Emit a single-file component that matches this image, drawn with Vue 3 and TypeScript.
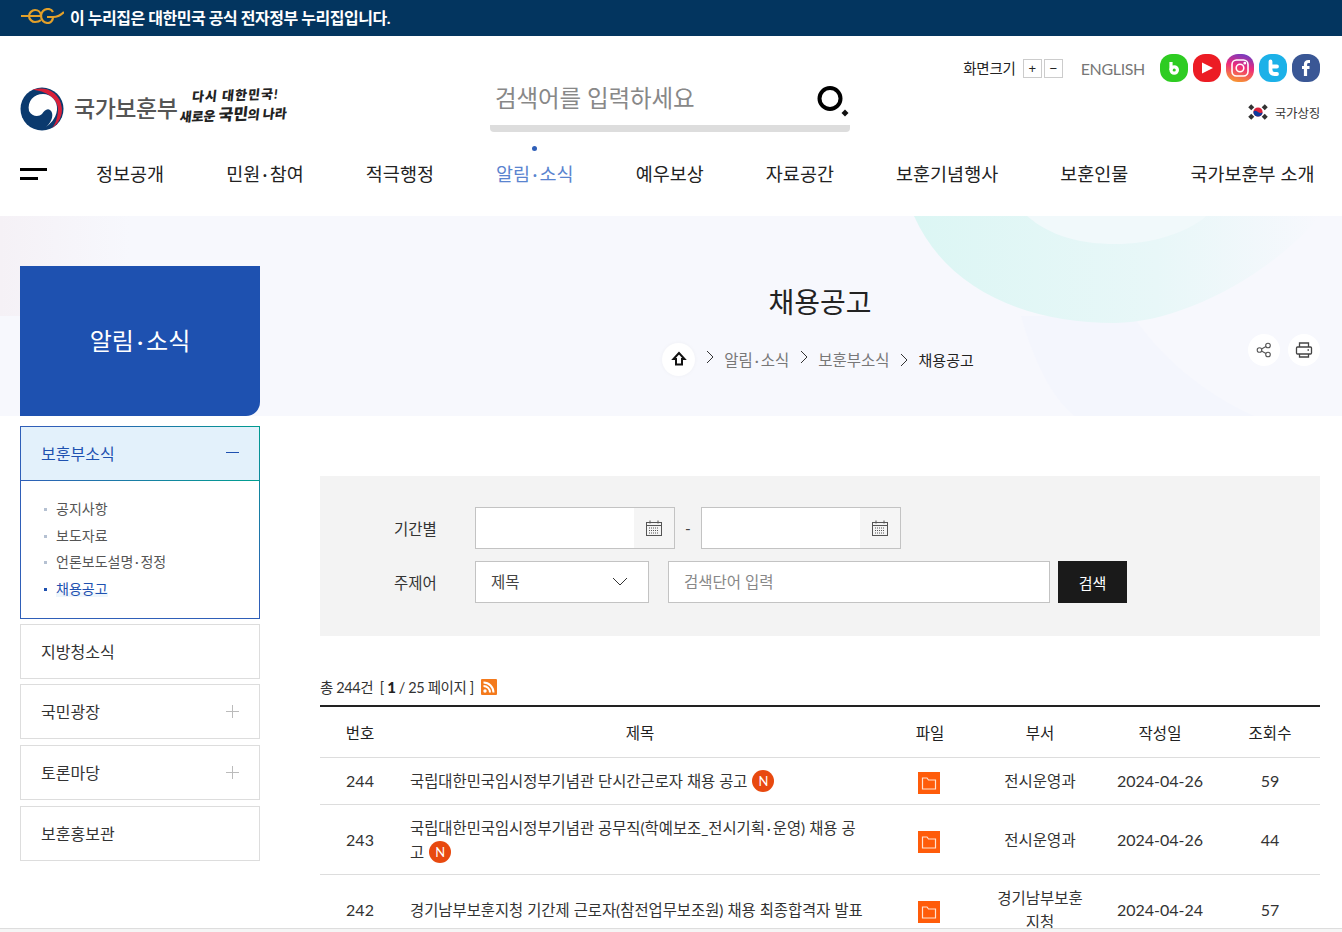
<script setup lang="ts">
const navItems: { label: string; active?: boolean }[] = [
  { label: '정보공개' },
  { label: '민원\u2009·\u2009참여' },
  { label: '적극행정' },
  { label: '알림\u2009·\u2009소식', active: true },
  { label: '예우보상' },
  { label: '자료공간' },
  { label: '보훈기념행사' },
  { label: '보훈인물' },
  { label: '국가보훈부 소개' },
]
const subItems = [
  { label: '공지사항' },
  { label: '보도자료' },
  { label: '언론보도설명\u2009·\u2009정정' },
  { label: '채용공고', active: true },
]
const sideItems = [
  { label: '지방청소식', plus: false },
  { label: '국민광장', plus: true },
  { label: '토론마당', plus: true },
  { label: '보훈홍보관', plus: false },
]
const rows = [
  { no: 244, title: '국립대한민국임시정부기념관 단시간근로자 채용 공고', isNew: true, dept: '전시운영과', date: '2024-04-26', views: 59 },
  { no: 243, title: '국립대한민국임시정부기념관 공무직(학예보조_전시기획\u2009·\u2009운영) 채용 공고', isNew: true, dept: '전시운영과', date: '2024-04-26', views: 44 },
  { no: 242, title: '경기남부보훈지청 기간제 근로자(참전업무보조원) 채용 최종합격자 발표', isNew: false, dept: '경기남부보훈지청', date: '2024-04-24', views: 57 },
]
</script>

<template>
  <div class="page">
    <div class="gov-bar">
      <svg class="egov" viewBox="0 0 44 16" width="44" height="16" fill="none" stroke="#e3a02a" stroke-width="2.200">
        <path d="M1 8h20c0-4-3-6-6-6s-6 3-6 6 3 6 6 6c3 0 5-1 6-2" />
        <path d="M33 4c-1-2-3-3-5-3-4 0-7 3-7 7s3 7 7 7c3 0 5-3 5-6h-6" />
        <path d="M33 9c4 0 8-2 11-5" />
      </svg>
      <span>이 누리집은 대한민국 공식 전자정부 누리집입니다.</span>
    </div>

    <header class="header">
      <div class="header-top">
        <div class="logo">
          <svg class="taegeuk" viewBox="0 0 44 44" width="44" height="44">
            <circle cx="22" cy="22" r="21.500" fill="#0b3a6e" />
            <path d="M12 3.100A21.500 21.500 0 0 1 32 41C36 36 38 29 38 22 38 12 25 3 12 3.100z" fill="#d8203a" />
            <path d="M9 24C7 14 14 7 23 7 31 7 38 14 37 23 36 32 29 38 26 40 33 34 34 26 30 23 27 21 24 24 22 27 19 30 12 30 9 24z" fill="#fff" />
          </svg>
          <span class="logo-name">국가보훈부</span>
          <div class="slogan">
            <span class="slogan-1">다시 대한민국!</span>
            <span class="slogan-2">새로운 <b>국민</b>의 나라</span>
          </div>
        </div>

        <div class="search">
          <span class="search-text">검색어를 입력하세요</span>
          <svg class="search-icon" viewBox="0 0 34 34" width="34" height="34" fill="none">
            <circle cx="14" cy="15.500" r="10.500" stroke="#000" stroke-width="4" />
            <path d="M29 26.500l3.500 3.500-3.500 3.500-3.500-3.500z" fill="#111" />
          </svg>
        </div>

        <div class="utils">
          <div class="utils-row">
            <span class="zoom-label">화면크기</span>
            <span class="zoom-btn first">+</span>
            <span class="zoom-btn">−</span>
            <span class="english">ENGLISH</span>
            <div class="socials">
              <span class="social blog">
                <svg viewBox="0 0 28 28" width="28" height="28" fill="none" stroke="#fff" stroke-width="3.200">
                  <path d="M11 8v8" /><circle cx="14.200" cy="16" r="3.200" />
                </svg>
              </span>
              <span class="social yt">
                <svg viewBox="0 0 28 28" width="28" height="28"><path d="M9 8.500l11 5.500-11 5.500z" fill="#fff" /></svg>
              </span>
              <span class="social ig">
                <svg viewBox="0 0 28 28" width="28" height="28" fill="none" stroke="#fff" stroke-width="1.600">
                  <rect x="6" y="6" width="16" height="16" rx="4.500" />
                  <circle cx="14" cy="14" r="3.800" />
                  <circle cx="18.800" cy="9.200" r=".6" fill="#fff" />
                </svg>
              </span>
              <span class="social tw">
                <svg viewBox="0 0 28 28" width="28" height="28" fill="none" stroke="#fff" stroke-width="3.800" stroke-linecap="round">
                  <path d="M11.500 7.500v8c0 3 1.500 4.500 4 4.500h2.500M11.500 12.500h6.500" />
                </svg>
              </span>
              <span class="social fb">
                <svg viewBox="0 0 28 28" width="28" height="28" fill="none" stroke="#fff" stroke-width="3.200">
                  <path d="M18 7.500h-1.500c-2 0-3 1-3 3V22M10 13.500h7.500" />
                </svg>
              </span>
            </div>
          </div>
          <div class="symbol">
            <svg viewBox="0 0 20 18" width="20" height="18">
              <circle cx="10" cy="9" r="4.600" fill="#d8203a" />
              <path d="M5.400 9a4.600 4.600 0 0 0 9.200 0c-1 2-3 1-4.600 0s-3.600-2-4.600 0z" fill="#0b3a9e" />
              <g stroke="#333" stroke-width="2.200">
                <path d="M1 5l3-3M2.500 6.500l3-3" />
                <path d="M16 2l3 3M14.500 3.500l3 3" />
                <path d="M1 13l3 3M2.500 11.500l3 3" />
                <path d="M19 13l-3 3M17.500 11.500l-3 3" />
              </g>
            </svg>
            <span>국가상징</span>
          </div>
        </div>
      </div>

      <nav class="nav">
        <span class="burger"><i></i><i></i></span>
        <a v-for="item in navItems" :key="item.label" class="nav-item" :class="{ active: item.active }">{{ item.label }}</a>
      </nav>
    </header>

    <section class="banner">
      <svg class="banner-art" viewBox="0 0 1342 200" width="1342" height="200" preserveAspectRatio="none">
        <defs>
          <linearGradient id="tealFade" x1="0" x2="1" y1="0" y2="0">
            <stop offset="0" stop-color="#dcf6f4" />
            <stop offset=".6" stop-color="#e8f7f8" />
            <stop offset="1" stop-color="#f7f8fd" />
          </linearGradient>
          <linearGradient id="pinkFade" x1="0" x2="1" y1="0" y2="0">
            <stop offset="0" stop-color="#f5f1f6" />
            <stop offset="1" stop-color="#f7f8fd" />
          </linearGradient>
        </defs>
        <rect x="0" y="0" width="130" height="100" fill="url(#pinkFade)" />
        <path d="M1021 100C1035 150 1055 185 1075 200H1254C1200 175 1160 140 1133 100z" fill="#f4f6fd" />
        <path d="M914 0C945 70 1020 107 1115 107 1180 107 1270 60 1320 0z" fill="url(#tealFade)" />
        <path d="M1027 0C1050 20 1080 28 1115 28 1150 28 1185 18 1207 0z" fill="#f1f9fb" />
      </svg>
      <div class="section-card">알림&#8201;·&#8201;소식</div>
      <div class="banner-center">
        <h1 class="page-title">채용공고</h1>
        <div class="crumbs">
          <span class="home">
            <svg viewBox="0 0 16 16" width="16" height="16" fill="none" stroke="#111" stroke-width="2">
              <path d="M8 2L2.500 8H5v5.500h6V8h2.500z" />
            </svg>
          </span>
          <svg class="chev" viewBox="0 0 8 14" width="8" height="14" fill="none" stroke="#333"><path d="M1 1l6 6-6 6" /></svg>
          <span class="crumb">알림&#8201;·&#8201;소식</span>
          <svg class="chev" viewBox="0 0 8 14" width="8" height="14" fill="none" stroke="#333"><path d="M1 1l6 6-6 6" /></svg>
          <span class="crumb">보훈부소식</span>
          <svg class="chev low" viewBox="0 0 8 14" width="8" height="14" fill="none" stroke="#333"><path d="M1 1l6 6-6 6" /></svg>
          <span class="crumb current">채용공고</span>
        </div>
      </div>
      <div class="banner-tools">
        <span class="tool">
          <svg viewBox="0 0 16 16" width="16" height="16" fill="none" stroke="#555" stroke-width="1.100">
            <circle cx="3.500" cy="8" r="2.300" />
            <circle cx="12" cy="3.500" r="2.300" />
            <circle cx="12" cy="12.500" r="2.300" />
            <path d="M5.500 7l4.500-2.500M5.500 9l4.500 2.500" />
          </svg>
        </span>
        <span class="tool">
          <svg viewBox="0 0 18 18" width="18" height="18" fill="none" stroke="#444" stroke-width="1.300">
            <path d="M4.500 6V2h9v4" />
            <rect x="1.500" y="6" width="15" height="7" rx="1" />
            <path d="M4.500 13v3h9v-3" />
            <path d="M12.500 9h1.500" />
          </svg>
        </span>
      </div>
    </section>

    <div class="content">
      <aside class="sidebar">
        <div class="side-active">
          <div class="side-active-head">
            <span>보훈부소식</span>
            <i class="side-minus"></i>
          </div>
          <ul class="sub-list">
            <li v-for="s in subItems" :key="s.label" class="sub-item" :class="{ active: s.active }">
              <span>{{ s.label }}</span>
            </li>
          </ul>
        </div>
        <div v-for="item in sideItems" :key="item.label" class="side-item">
          <span>{{ item.label }}</span>
          <svg v-if="item.plus" class="side-plus" viewBox="0 0 13 13" width="13" height="13" stroke="#bbb"><path d="M6.500 0v13M0 6.500h13" /></svg>
        </div>
      </aside>

      <main class="main">
        <form class="filter" @submit.prevent>
          <div class="filter-row">
            <label class="filter-label">기간별</label>
            <div class="date-box">
              <span class="date-value"></span>
              <span class="date-btn">
                <svg viewBox="0 0 16 16" width="16" height="16" fill="none" stroke="#555">
                  <rect x=".5" y="2.500" width="15" height="13" />
                  <path d="M.5 5.500h15M4 .5v3M12 .5v3" />
                  <path d="M3 8h10M3 10.500h10M3 13h10" stroke-dasharray="1 1" />
                </svg>
              </span>
            </div>
            <span class="dash">-</span>
            <div class="date-box">
              <span class="date-value"></span>
              <span class="date-btn">
                <svg viewBox="0 0 16 16" width="16" height="16" fill="none" stroke="#555">
                  <rect x=".5" y="2.500" width="15" height="13" />
                  <path d="M.5 5.500h15M4 .5v3M12 .5v3" />
                  <path d="M3 8h10M3 10.500h10M3 13h10" stroke-dasharray="1 1" />
                </svg>
              </span>
            </div>
          </div>
          <div class="filter-row">
            <label class="filter-label">주제어</label>
            <div class="select-box">
              <span>제목</span>
              <svg viewBox="0 0 16 9" width="16" height="9" fill="none" stroke="#333"><path d="M1 1l7 7 7-7" /></svg>
            </div>
            <div class="keyword">검색단어 입력</div>
            <button class="search-btn" type="button">검색</button>
          </div>
        </form>

        <div class="total">
          <span>총 244건 &nbsp;[ <b>1</b> / 25 페이지 ]</span>
          <svg class="rss" viewBox="0 0 16 16" width="16" height="16">
            <rect width="16" height="16" rx="1" fill="#f47a1c" />
            <circle cx="4" cy="12" r="1.700" fill="#fff" />
            <path d="M2.500 7a6.500 6.500 0 0 1 6.500 6.500M2.500 3.500A10 10 0 0 1 12.500 13.500" fill="none" stroke="#fff" stroke-width="2" />
          </svg>
        </div>

        <table class="board">
          <colgroup>
            <col class="c-no" /><col /><col class="c-file" /><col class="c-dept" /><col class="c-date" /><col class="c-views" />
          </colgroup>
          <thead>
            <tr>
              <th>번호</th><th>제목</th><th>파일</th><th>부서</th><th>작성일</th><th>조회수</th>
            </tr>
          </thead>
          <tbody>
            <tr v-for="r in rows" :key="r.no">
              <td>{{ r.no }}</td>
              <td class="title-cell">{{ r.title }} <span v-if="r.isNew" class="new">N</span></td>
              <td>
                <span class="file">
                  <svg viewBox="0 0 22 22" width="22" height="22" fill="none" stroke="#ffe3d2" stroke-width="1.200">
                    <path d="M4.500 17V6h4.500l1.500 2h7v9z" />
                  </svg>
                </span>
              </td>
              <td class="dept">{{ r.dept }}</td>
              <td>{{ r.date }}</td>
              <td>{{ r.views }}</td>
            </tr>
          </tbody>
        </table>
      </main>
    </div>
    <div class="page-edge"></div>
  </div>
</template>

<style>
html, body { height: 100%; overflow: hidden; }
</style>

<style scoped>
.page {
  position: relative;
  height: 932px;
  overflow: hidden;
  background: #fff;
  color: #333;
  font-family: Lato, "Noto Sans CJK KR", sans-serif;
  font-size: 15.500px;
}
.gov-bar {
  height: 36px;
  box-sizing: border-box;
  padding: 0 0 2px 20px;
  background: #03355f;
  color: #fff;
  display: flex;
  align-items: center;
  gap: 6px;
  font-size: 16px;
  font-weight: 700;
  letter-spacing: -0.45px;
}
.egov { margin-top: -2px; }

.header { height: 180px; padding: 0 22px 0 20px; display: flex; flex-direction: column; }
.header-top { display: flex; height: 110px; }
.logo { width: 470px; display: flex; align-items: flex-start; padding-top: 50px; box-sizing: border-box; }
.taegeuk { margin-top: 1px; flex: none; }
.logo-name { margin: 6px 0 0 10px; font-size: 23px; line-height: 32px; color: #555; font-weight: 500; letter-spacing: -0.5px; width: 103px; flex: none; white-space: nowrap; }
.slogan { display: flex; flex-direction: column; margin: 0 0 0 4px; font-weight: 900; color: #222; transform: skewX(-8deg) rotate(-2deg); white-space: nowrap; }
.slogan-1 { font-size: 13px; line-height: 18px; padding-left: 10px; letter-spacing: 1px; }
.slogan-2 { font-size: 13px; line-height: 20px; letter-spacing: -0.1px; }
.slogan-2 b { font-size: 16px; }

.search { width: 360px; position: relative; border-bottom: 7px solid #ddd; border-radius: 4px; height: 96px; box-sizing: border-box; padding: 44px 0 0 5px; flex: none; }
.search-text { font-size: 23.500px; line-height: 36px; color: #888; letter-spacing: -0.1px; }
.search-icon { position: absolute; right: 0; top: 47px; }

.utils { flex: 1; display: flex; flex-direction: column; align-items: flex-end; padding-top: 18px; }
.utils-row { display: flex; align-items: center; height: 28px; }
.zoom-label { font-size: 14.500px; color: #222; margin-right: 7px; letter-spacing: -0.2px; margin-top: -2px; }
.zoom-btn { width: 19px; height: 19px; border: 1px solid #ccc; box-sizing: border-box; margin-left: 2px; display: flex; align-items: center; justify-content: center; font-size: 13px; color: #222; font-family: "Liberation Sans", sans-serif; }
.zoom-btn.first { margin-left: 0; }
.english { margin: 0 15px 0 18px; font-size: 16px; color: #777; letter-spacing: -0.35px; }
.socials { display: flex; gap: 5px; }
.social { width: 28px; height: 28px; border-radius: 12px; display: flex; align-items: center; justify-content: center; }
.blog { background: #2ecc22; }
.yt { background: #ec1c24; }
.ig { background: linear-gradient(15deg, #f9a825 0%, #ee2a7b 55%, #5a3fd0 100%); }
.tw { background: #1cb1e8; }
.fb { background: #3a5795; }
.symbol { display: flex; align-items: center; gap: 7px; margin-top: 18px; font-size: 12.500px; color: #333; letter-spacing: -0.2px; height: 24px; }

.nav { display: flex; align-items: center; height: 60px; margin-top: -2px; }
.burger { width: 27px; height: 12px; margin-right: 49px; display: flex; flex-direction: column; justify-content: space-between; }
.burger i { display: block; height: 3px; background: #000; }
.burger i:first-child { width: 27px; }
.burger i:last-child { width: 18px; }
.nav-item { position: relative; font-size: 18.500px; color: #222; margin-right: 62px; white-space: nowrap; line-height: 26px; letter-spacing: 0.02px; }
.nav-item:last-child { margin-right: 0; }
.nav-item.active { color: #5a84cf; }
.nav-item.active::before { content: ""; position: absolute; left: 50%; top: -15px; width: 5px; height: 5px; margin-left: -3px; border-radius: 50%; background: #2f5fb8; }

.banner { position: relative; height: 200px; background: #f7f8fd; overflow: hidden; }
.banner-art { position: absolute; left: 0; top: 0; }
.section-card { position: absolute; left: 20px; bottom: 0; width: 240px; height: 150px; box-sizing: border-box; padding-bottom: 3px; background: #1e51b0; color: #fff; border-bottom-right-radius: 14px; display: flex; align-items: center; justify-content: center; font-size: 24px; }
.banner-center { position: absolute; left: 320px; right: 22px; top: 66px; display: flex; flex-direction: column; align-items: center; }
.page-title { margin: 0; font-size: 28px; line-height: 40px; font-weight: 400; color: #222; }
.crumbs { display: flex; align-items: center; height: 34px; margin-top: 20px; margin-left: -2px; }
.home { width: 33px; height: 33px; border-radius: 50%; background: #fff; display: flex; align-items: center; justify-content: center; box-shadow: 0 0 4px rgba(0,0,0,.04); margin-left: -2px; }
.chev { margin: -4px 10.500px 0; }
.chev.low { margin-top: 1px; }
.crumb { color: #777; }
.crumb.current { color: #222; font-size: 15px; }
.banner-tools { position: absolute; right: 22px; top: 118px; display: flex; gap: 8px; }
.tool { width: 32px; height: 32px; border-radius: 50%; background: #fff; display: flex; align-items: center; justify-content: center; }

.content { display: flex; padding: 10px 22px 0 20px; }
.sidebar { width: 240px; flex: none; margin-right: 60px; display: flex; flex-direction: column; }
.side-active { border: 1px solid; border-image: linear-gradient(45deg, #2f5fb8 60%, #009c90 100%) 1; height: 193px; box-sizing: border-box; }
.side-active-head { height: 54px; box-sizing: border-box; padding: 0 20px 2px; background: #e3f1fb; border-bottom: 1px solid; border-image: linear-gradient(90deg, #2f5fb8, #00a090) 1; display: flex; align-items: center; justify-content: space-between; font-size: 16px; color: #1e51b0; }
.side-minus { width: 13px; height: 1px; background: #1e51b0; }
.sub-list { margin: 0; padding: 14px 0 0 23px; list-style: none; }
.sub-item { position: relative; height: 26.700px; line-height: 27px; padding-left: 12px; font-size: 14px; color: #555; }
.sub-item::before { content: ""; position: absolute; left: 0; top: 13px; width: 3px; height: 3px; background: #b5c1d2; }
.sub-item.active { color: #1e51b0; }
.sub-item.active::before { background: #1e51b0; }
.sub-item.active span { background: linear-gradient(transparent 70%, #eef6fc 70%); }
.side-item { height: 55px; box-sizing: border-box; border: 1px solid #ddd; margin-top: 6px; display: flex; align-items: center; justify-content: space-between; padding: 0 20px 2px; font-size: 16px; color: #333; }
.side-active + .side-item, .side-active + .side-item + .side-item { margin-top: 5px; }
.side-plus { margin-top: 2px; }

.main { flex: 1; min-width: 0; padding-top: 50px; }
.filter { height: 160px; box-sizing: border-box; background: #f3f3f3; padding-top: 31px; }
.filter-row { display: flex; align-items: center; height: 42px; margin-bottom: 12px; padding-left: 74px; font-size: 15.500px; }
.filter-label { width: 81px; color: #333; margin-top: -1px; }
.date-box { width: 200px; height: 42px; box-sizing: border-box; background: #fff; border: 1px solid #c3c3c3; display: flex; }
.date-value { flex: 1; }
.date-btn { width: 40px; background: #f5f5f5; display: flex; align-items: center; justify-content: center; }
.dash { width: 26px; text-align: center; color: #444; }
.select-box { width: 174px; height: 42px; box-sizing: border-box; background: #fff; border: 1px solid #c3c3c3; display: flex; align-items: center; justify-content: space-between; padding: 0 20px 2px 15px; color: #444; }
.keyword { width: 382px; height: 42px; box-sizing: border-box; margin-left: 19px; background: #fff; border: 1px solid #c3c3c3; padding: 0 15px; line-height: 41px; color: #888; }
.search-btn { width: 69px; height: 42px; margin-left: 8px; border: 0; background: #1a1a1a; color: #fff; font: inherit; font-size: 15px; }

.total { display: flex; align-items: center; gap: 7px; height: 24px; margin-top: 38px; font-size: 14.500px; letter-spacing: -0.4px; color: #333; }
.total b { font-weight: 900; font-size: 15px; color: #222; }
.rss { margin-top: 1px; }

.board { width: 100%; margin-top: 7px; border-collapse: collapse; table-layout: fixed; border-top: 2px solid #222; }
.c-no { width: 80px; }
.c-file { width: 100px; }
.c-dept { width: 120px; }
.c-date { width: 120px; }
.c-views { width: 100px; }
.board th { height: 51px; box-sizing: border-box; font-weight: 400; font-size: 15.500px; color: #222; border-bottom: 1px solid #ddd; padding: 0; }
.board td { padding: 11px 0 10px; line-height: 24px; text-align: center; font-size: 16px; color: #333; border-bottom: 1px solid #ddd; }
.board td.title-cell { text-align: left; padding: 11px 14px 10px 10px; font-size: 15.400px; word-break: break-all; }
.board td.dept { font-size: 15.500px; padding: 11px 15px 10px; word-break: break-all; }
.new { display: inline-flex; align-items: center; justify-content: center; width: 22px; height: 22px; border-radius: 50%; background: #e8490f; color: #fff; font-size: 13px; vertical-align: top; margin: 1px 0 0 1px; }
.file { display: inline-flex; vertical-align: middle; width: 22px; height: 22px; background: #ff5c0a; margin: 2px 2px 0 0; }

.page-edge { position: absolute; left: 0; right: 0; bottom: 0; height: 4px; background: #f5f5f5; border-top: 1px solid #ddd; box-sizing: border-box; }
</style>
